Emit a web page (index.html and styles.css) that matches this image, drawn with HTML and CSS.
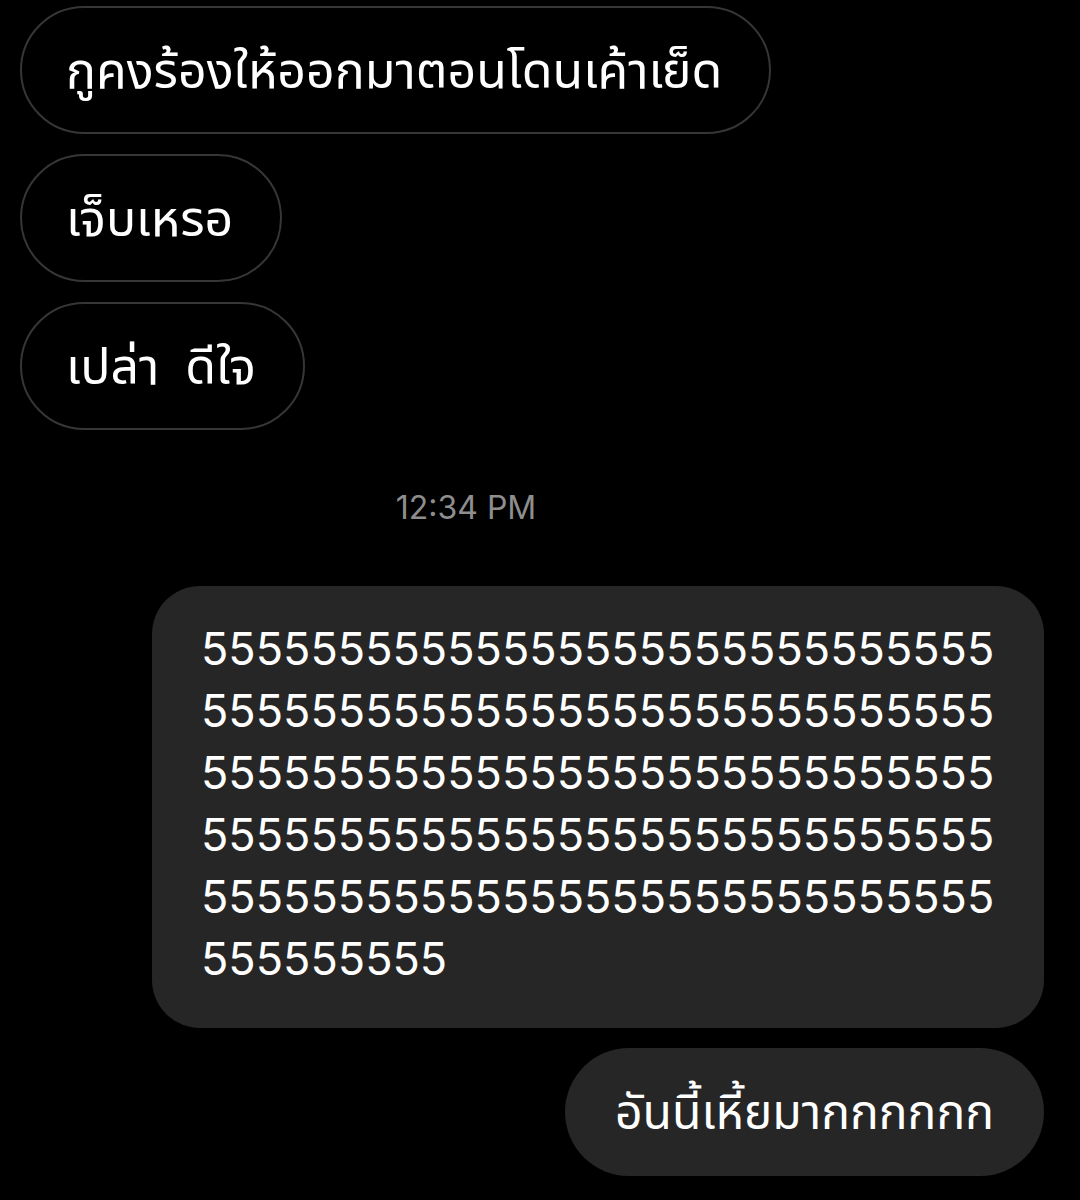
FILE: index.html
```html
<!DOCTYPE html>
<html lang="th">
<head>
    <meta charset="UTF-8">
    <meta name="viewport" content="width=device-width, initial-scale=1.0">
    <title>แชท</title>
    <link rel="stylesheet" href="styles.css">
</head>
<body>
    <div class="thread">
        <div class="msg in">กูคงร้องให้ออกมาตอนโดนเค้าเย็ด</div>
        <div class="msg in">เจ็บเหรอ</div>
        <div class="msg in wide-space">เปล่า ดีใจ</div>

        <div class="time">12:34 PM</div>

        <div class="msg out long">55555555555555555555555555555<wbr>55555555555555555555555555555<wbr>55555555555555555555555555555<wbr>55555555555555555555555555555<wbr>55555555555555555555555555555<wbr>555555555</div>
        <div class="msg out">อันนี้เหี้ยมากกกกกก</div>
    </div>
</body>
</html>
```

FILE: styles.css
```css
body {
    margin: 0;
    background: #000;
    color: #fff;
    font-family: Inter, "Noto Sans", "Noto Sans Thai", sans-serif;
}
.thread {
    display: flex;
    flex-direction: column;
    gap: 20px;
    padding: 6px 36px 24px 20px;
}
.msg {
    font-size: 50px;
    line-height: 62px;
    padding: 31px 47px 31px 44px;
    border-radius: 64px;
    max-width: 800px;
}
.msg.in {
    align-self: flex-start;
    border: 2px solid #363636;
}
.wide-space {
    word-spacing: 12px;
}
.msg.out {
    align-self: flex-end;
    background: #262626;
    font-size: 48px;
    padding: 33px 50px 33px 50px;
}
.msg.long {
    width: 800px;
    font-size: 45px;
    border-radius: 48px;
    padding: 32px 43px 38px 49px;
}
.time {
    text-align: center;
    padding-right: 132px;
    margin: 40px 0;
    font-size: 32px;
    line-height: 36px;
    color: #8e8e8e;
}
```
